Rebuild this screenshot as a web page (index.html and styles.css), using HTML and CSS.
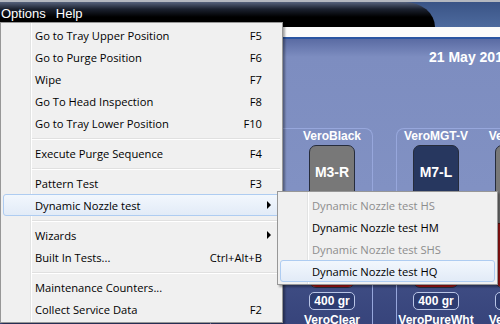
FILE: index.html
```html
<!DOCTYPE html>
<html lang="en">
<head>
    <meta charset="UTF-8">
    <meta name="viewport" content="width=device-width, initial-scale=1.0">
    <title>Printer Options</title>
    <link rel="stylesheet" href="styles.css">
</head>
<body>
    <div class="app">
        <div class="header">
            <div class="header-dark">
                <div class="menubar">
                    <span>Options</span>
                    <span>Help</span>
                </div>
            </div>
        </div>
        <div class="strip"></div>
        <div class="main">
            <p class="date">21 May 2014</p>
            <div class="heads">
                <!-- a primeira cabeca fica escondida atras do menu -->
                <div class="group first">
                    <div class="slot">
                        <p class="title">VeroBlack</p>
                        <div class="cart grey"><p class="code">M3-R</p><div class="level"></div></div>
                        <p class="badge">400 gr</p>
                        <p class="title material">VeroClear</p>
                    </div>
                </div>
                <div class="group">
                    <div class="slot">
                        <p class="title">VeroMGT-V</p>
                        <div class="cart navy"><p class="code">M7-L</p><div class="level"></div></div>
                        <p class="badge">400 gr</p>
                        <p class="title material">VeroPureWht</p>
                    </div>
                    <div class="slot">
                        <p class="title">VeroWhite</p>
                        <div class="cart grey"><p class="code">M8-R</p><div class="level"></div></div>
                        <p class="badge">400 gr</p>
                        <p class="title material">VeroWhite</p>
                    </div>
                </div>
            </div>
        </div>
    </div>

    <!-- menu Options aberto -->
    <div class="menu">
        <div class="item"><span>Go to Tray Upper Position</span><span class="key">F5</span></div>
        <div class="item"><span>Go to Purge Position</span><span class="key">F6</span></div>
        <div class="item"><span>Wipe</span><span class="key">F7</span></div>
        <div class="item"><span>Go To Head Inspection</span><span class="key">F8</span></div>
        <div class="item"><span>Go to Tray Lower Position</span><span class="key">F10</span></div>
        <div class="sep"></div>
        <div class="item"><span>Execute Purge Sequence</span><span class="key">F4</span></div>
        <div class="sep"></div>
        <div class="item"><span>Pattern Test</span><span class="key">F3</span></div>
        <div class="item hover"><span>Dynamic Nozzle test</span><span class="arrow"></span></div>
        <div class="sep"></div>
        <div class="item"><span>Wizards</span><span class="arrow"></span></div>
        <div class="item"><span>Built In Tests...</span><span class="key">Ctrl+Alt+B</span></div>
        <div class="sep"></div>
        <div class="item"><span>Maintenance Counters...</span></div>
        <div class="item"><span>Collect Service Data</span><span class="key">F2</span></div>
    </div>

    <!-- submenu Dynamic Nozzle test -->
    <div class="menu submenu">
        <div class="item disabled"><span>Dynamic Nozzle test HS</span></div>
        <div class="item"><span>Dynamic Nozzle test HM</span></div>
        <div class="item disabled"><span>Dynamic Nozzle test SHS</span></div>
        <div class="item hover"><span>Dynamic Nozzle test HQ</span></div>
    </div>
</body>
</html>
```

FILE: styles.css
```css
* {
    margin: 0;
    padding: 0;
    box-sizing: border-box;
}
body {
    width: 500px;
    height: 324px;
    overflow: hidden;
    position: relative;
    font-family: "Liberation Sans", Arial, sans-serif;
    background-color: #37447b;
}
.app {
    display: flex;
    flex-direction: column;
    height: 324px;
}

/* barra de cima */
.header {
    height: 27px;
    border-top: 2px solid #b4b8c0;
    background: linear-gradient(#3a5486, #4d6a9e);
}
.header-dark {
    width: 435px;
    height: 100%;
    padding-top: 2px;
    background: linear-gradient(#56627c, #1c2230 7px, #000 15px);
    border-top-right-radius: 30px 25px;
}
.menubar {
    display: flex;
    gap: 10px;
    padding-left: 1px;
    color: white;
    font-size: 13px;
    line-height: 19px;
}
.strip {
    height: 12px;
    background-color: #fbfbfb;
    border-bottom: 2px solid #2a55a2;
}

/* area principal */
.main {
    flex: 1;
    min-height: 0;
    overflow: hidden;
    padding-top: 10px;
    background: linear-gradient(#5a6ba3 0, #7d8dc0 18px, #8191c3 150px, #7787ba 225px, #3e4c83 245px, #37447b 100%);
}
.date {
    padding-left: 429px;
    white-space: nowrap;
    color: white;
    font-weight: bold;
    font-size: 14px;
    line-height: 16px;
}
.heads {
    display: flex;
    gap: 23px;
    margin-top: 63px;
    margin-left: 210px;
}
.group {
    flex-shrink: 0;
    display: flex;
    gap: 36px;
    padding: 0 17px 0 16px;
    border: 1px solid #97a7dc;
    border-bottom: none;
    border-radius: 8px 8px 0 0;
}
.first {
    padding-left: 98px; /* o espaco da cabeca que o menu cobre */
}
.slot {
    flex-shrink: 0;
    width: 46px;
    display: flex;
    flex-direction: column;
    align-items: center;
}
.title {
    white-space: nowrap;
    color: white;
    font-weight: bold;
    font-size: 12px;
    line-height: 14px;
}
.cart {
    width: 46px;
    height: 143px;
    margin-top: 2px;
    border: 1px solid #262c3c;
    border-radius: 7px;
    overflow: hidden;
    display: flex;
    flex-direction: column;
    align-items: center;
}
.grey {
    background-color: #787878;
}
.navy {
    background-color: #27375f;
}
.code {
    margin-top: 18px;
    color: white;
    font-weight: bold;
    font-size: 14px;
    line-height: 16px;
}
.level {
    margin-top: auto;
    width: 100%;
    height: 64px;
    background-color: #a51616;
    border-top: 1px solid #5a1010;
}
.badge {
    margin-top: 4px;
    width: 46px;
    height: 18px;
    border: 1px solid #b9c5e6;
    border-radius: 5px;
    background-color: #2d3c71;
    color: white;
    text-align: center;
    font-weight: bold;
    font-size: 12px;
    line-height: 16px;
}
.material {
    margin-top: 3px;
}

/* menus suspensos */
.menu {
    position: absolute;
    left: 0;
    top: 22px;
    width: 283px;
    padding: 1px 2px 2px;
    border: 1px solid #979797;
    background-color: #f0f0f0;
    background-image: linear-gradient(to right, transparent 29px, #e2e3e3 29px, #e2e3e3 30px, #fff 30px, #fff 31px, transparent 31px);
    box-shadow: 2px 2px 2px rgba(0, 0, 0, 0.35);
    font-family: "Open Sans", "Noto Sans", sans-serif;
    font-size: 11.2px;
    color: #000;
}
.submenu {
    left: 277px;
    top: 191px;
    width: 221px;
    padding-top: 2px;
}
.item {
    display: grid;
    grid-template-columns: 1fr auto 17px;
    align-items: center;
    height: 22px;
    padding-left: 31px;
    border: 1px solid transparent;
    border-radius: 3px;
    white-space: nowrap;
}
.key {
    grid-column: 2;
    text-align: right;
}
.arrow {
    grid-column: 3;
    width: 0;
    height: 0;
    margin-left: 5px;
    border-left: 4px solid #000;
    border-top: 4px solid transparent;
    border-bottom: 4px solid transparent;
}
.hover {
    border-color: #aeccf1;
    background: linear-gradient(#f2f7fd, #e2ebf7);
}
.disabled {
    color: #8d8d8d;
}
.sep {
    height: 2px;
    margin: 4px 0 2px 29px;
    background-color: #e0e0e0;
    border-bottom: 1px solid #fff;
}
```
